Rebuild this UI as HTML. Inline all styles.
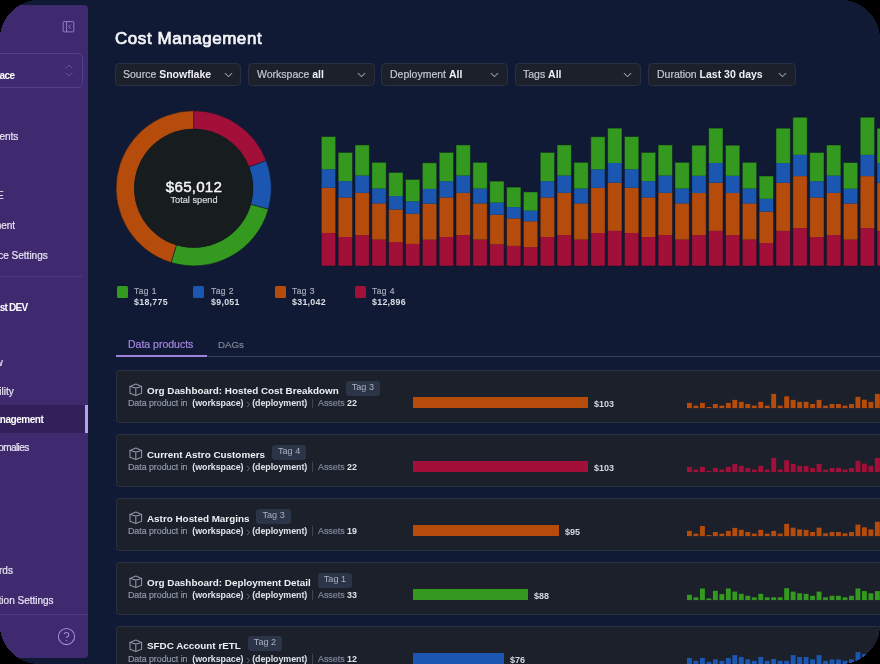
<!DOCTYPE html>
<html><head><meta charset="utf-8"><style>
html,body{margin:0;padding:0;background:#000;width:880px;height:664px;overflow:hidden}
.frame{position:absolute;left:0;top:0;width:880px;height:664px;background:#111a35;overflow:hidden}
.t{position:absolute;white-space:nowrap;line-height:1;font-family:'Liberation Sans', sans-serif;will-change:transform}
.r{-webkit-text-stroke:0.2px currentColor}
.r b{-webkit-text-stroke-width:0}
b{font-weight:700}
</style></head><body><div class="frame"><div style="position:absolute;left:0;top:5.4px;width:88px;height:652.2px;background:#3f2a70;border-radius:0 4px 4px 0"></div><div style="position:absolute;left:0;top:0;width:88px;height:664px;overflow:hidden"><div style="position:absolute;left:0;top:405px;width:88px;height:28px;background:#32205a"></div><div style="position:absolute;left:85px;top:405px;width:3px;height:28px;background:#b8a0ea"></div><div style="position:absolute;left:-60px;top:53px;width:142.5px;height:35px;border:1px solid #514089;border-radius:5px;box-sizing:border-box"></div><svg style="position:absolute;left:63px;top:63px" width="12" height="15" viewBox="0 0 12 15"><path d="M2.5 5.5 L6 2 L9.5 5.5 M2.5 9.5 L6 13 L9.5 9.5" fill="none" stroke="#63519b" stroke-width="1"/></svg><div class="t" style="right:73.40px;top:70.53px;font-size:10px;font-weight:700;color:#ffffff;letter-spacing:-0.5px">Workspace</div><svg style="position:absolute;left:62px;top:20px" width="13" height="13" viewBox="0 0 13 13"><rect x="1.2" y="1.6" width="10.6" height="10.3" rx="0.7" fill="none" stroke="#8f7cc2" stroke-width="1"/><path d="M4.6 1.6 V11.9" stroke="#8f7cc2" stroke-width="1"/><path d="M8.7 4.6 L6.7 6.7 L8.7 8.8" fill="none" stroke="#8f7cc2" stroke-width="1"/></svg><div class="t r" style="right:69.80px;top:132.03px;font-size:10px;font-weight:400;color:#e9e4f2;letter-spacing:0px">Deployments</div><div class="t r" style="right:84.60px;top:191.34px;font-size:10px;font-weight:400;color:#e9e4f2;letter-spacing:0px">Cloud IDE</div><div class="t r" style="right:73.10px;top:221.23px;font-size:10px;font-weight:400;color:#e9e4f2;letter-spacing:0px">Environment</div><div class="t r" style="right:40.50px;top:250.73px;font-size:10px;font-weight:400;color:#e9e4f2;letter-spacing:0px">Workspace Settings</div><div style="position:absolute;left:0;top:276px;width:82px;height:1px;background:#4e3c83"></div><div class="t" style="right:60.20px;top:302.74px;font-size:10px;font-weight:700;color:#ffffff;letter-spacing:-0.75px">Astronomer Test DEV</div><div class="t r" style="right:85.20px;top:358.44px;font-size:10px;font-weight:400;color:#e9e4f2;letter-spacing:0px">Overview</div><div class="t r" style="right:74.30px;top:386.94px;font-size:10px;font-weight:400;color:#e9e4f2;letter-spacing:0px">Observability</div><div class="t" style="right:44.40px;top:414.64px;font-size:10px;font-weight:700;color:#ffffff;letter-spacing:-0.45px">Cost Management</div><div class="t r" style="right:59.50px;top:442.74px;font-size:10px;font-weight:400;color:#e9e4f2;letter-spacing:-0.55px">Anomalies</div><div class="t r" style="right:74.70px;top:566.24px;font-size:10px;font-weight:400;color:#e9e4f2;letter-spacing:0px">Dashboards</div><div class="t r" style="right:34.00px;top:595.74px;font-size:10px;font-weight:400;color:#e9e4f2;letter-spacing:0px">Organization Settings</div><div style="position:absolute;left:0;top:614px;width:88px;height:1px;background:#4e3c83"></div><svg style="position:absolute;left:57px;top:626.5px" width="19" height="19" viewBox="0 0 19 19"><circle cx="9.5" cy="9.5" r="8.1" fill="none" stroke="#a08ed6" stroke-width="1.05"/><path d="M7.1 7.2 a2.4 2.4 0 0 1 4.7 0.7 c0 1.6 -2.3 2.3 -2.3 2.3 V10.8" fill="none" stroke="#a08ed6" stroke-width="1.15"/><circle cx="9.5" cy="13.6" r="0.7" fill="#a08ed6"/></svg></div><div class="t" style="left:115.30px;top:30.21px;font-size:17.0px;font-weight:400;color:#f4f5f8;-webkit-text-stroke:0.7px #f4f5f8;letter-spacing:0.55px;">Cost Management</div><div style="position:absolute;left:114.80px;top:63px;width:126.70px;height:23px;background:#1c202b;border:1px solid #272f40;border-radius:4px;box-sizing:border-box"></div><div class="t r" style="left:123.40px;top:69.31px;font-size:10.5px;font-weight:400;color:#c3c8d1;">Source <b style="font-weight:700;color:#eef0f4">Snowflake</b></div><svg style="position:absolute;left:223.60px;top:71px" width="9" height="8" viewBox="0 0 9 8"><path d="M0.9 2.2 L4.5 5.6 L8.1 2.2" fill="none" stroke="#8d95a3" stroke-width="1.1"/></svg><div style="position:absolute;left:248.30px;top:63px;width:126.30px;height:23px;background:#1c202b;border:1px solid #272f40;border-radius:4px;box-sizing:border-box"></div><div class="t r" style="left:256.90px;top:69.31px;font-size:10.5px;font-weight:400;color:#c3c8d1;">Workspace <b style="font-weight:700;color:#eef0f4">all</b></div><svg style="position:absolute;left:356.90px;top:71px" width="9" height="8" viewBox="0 0 9 8"><path d="M0.9 2.2 L4.5 5.6 L8.1 2.2" fill="none" stroke="#8d95a3" stroke-width="1.1"/></svg><div style="position:absolute;left:381.40px;top:63px;width:126.30px;height:23px;background:#1c202b;border:1px solid #272f40;border-radius:4px;box-sizing:border-box"></div><div class="t r" style="left:390.00px;top:69.31px;font-size:10.5px;font-weight:400;color:#c3c8d1;">Deployment <b style="font-weight:700;color:#eef0f4">All</b></div><svg style="position:absolute;left:489.90px;top:71px" width="9" height="8" viewBox="0 0 9 8"><path d="M0.9 2.2 L4.5 5.6 L8.1 2.2" fill="none" stroke="#8d95a3" stroke-width="1.1"/></svg><div style="position:absolute;left:514.50px;top:63px;width:126.80px;height:23px;background:#1c202b;border:1px solid #272f40;border-radius:4px;box-sizing:border-box"></div><div class="t r" style="left:523.10px;top:69.31px;font-size:10.5px;font-weight:400;color:#c3c8d1;">Tags <b style="font-weight:700;color:#eef0f4">All</b></div><svg style="position:absolute;left:623.20px;top:71px" width="9" height="8" viewBox="0 0 9 8"><path d="M0.9 2.2 L4.5 5.6 L8.1 2.2" fill="none" stroke="#8d95a3" stroke-width="1.1"/></svg><div style="position:absolute;left:648.20px;top:63px;width:147.80px;height:23px;background:#1c202b;border:1px solid #272f40;border-radius:4px;box-sizing:border-box"></div><div class="t r" style="left:656.80px;top:69.31px;font-size:10.5px;font-weight:400;color:#c3c8d1;">Duration <b style="font-weight:700;color:#eef0f4">Last 30 days</b></div><svg style="position:absolute;left:778.40px;top:71px" width="9" height="8" viewBox="0 0 9 8"><path d="M0.9 2.2 L4.5 5.6 L8.1 2.2" fill="none" stroke="#8d95a3" stroke-width="1.1"/></svg><svg style="position:absolute;left:0;top:0" width="880" height="300"><path d="M193.650 110.700 A77.6 77.6 0 0 1 266.144 160.617 L249.048 167.145 A59.3 59.3 0 0 0 193.650 129.000 Z" fill="#a21039" stroke="#141a24" stroke-width="0.6"/><path d="M266.144 160.617 A77.6 77.6 0 0 1 268.355 209.299 L250.738 204.347 A59.3 59.3 0 0 0 249.048 167.145 Z" fill="#1b57b0" stroke="#141a24" stroke-width="0.6"/><path d="M268.355 209.299 A77.6 77.6 0 0 1 171.092 262.549 L176.411 245.039 A59.3 59.3 0 0 0 250.738 204.347 Z" fill="#339a1f" stroke="#141a24" stroke-width="0.6"/><path d="M171.092 262.549 A77.6 77.6 0 0 1 193.650 110.700 L193.650 129.000 A59.3 59.3 0 0 0 176.411 245.039 Z" fill="#b54c0b" stroke="#141a24" stroke-width="0.6"/><circle cx="193.65" cy="188.3" r="59.3" fill="#171c1f"/></svg><div class="t" style="left:133.65px;top:178.63px;font-size:15.2px;font-weight:400;color:#f6f7f9;width:120px;text-align:center;-webkit-text-stroke:0.4px #f6f7f9;letter-spacing:0.2px;">$65,012</div><div class="t r" style="left:133.65px;top:196.21px;font-size:9.2px;font-weight:400;color:#d5d9df;width:120px;text-align:center;">Total spend</div><div style="position:absolute;left:116.80px;top:286px;width:11.3px;height:11.5px;background:#339a1f;border-radius:1.5px"></div><div class="t r" style="left:134.30px;top:287.10px;font-size:8.5px;font-weight:400;color:#a3aab8;letter-spacing:0.4px;">Tag 1</div><div class="t" style="left:134.30px;top:298.45px;font-size:8.8px;font-weight:700;color:#d9dde4;letter-spacing:0.3px;">$18,775</div><div style="position:absolute;left:193.20px;top:286px;width:11.3px;height:11.5px;background:#1b57b0;border-radius:1.5px"></div><div class="t r" style="left:210.70px;top:287.10px;font-size:8.5px;font-weight:400;color:#a3aab8;letter-spacing:0.4px;">Tag 2</div><div class="t" style="left:210.70px;top:298.45px;font-size:8.8px;font-weight:700;color:#d9dde4;letter-spacing:0.3px;">$9,051</div><div style="position:absolute;left:274.80px;top:286px;width:11.3px;height:11.5px;background:#b54c0b;border-radius:1.5px"></div><div class="t r" style="left:292.30px;top:287.10px;font-size:8.5px;font-weight:400;color:#a3aab8;letter-spacing:0.4px;">Tag 3</div><div class="t" style="left:292.30px;top:298.45px;font-size:8.8px;font-weight:700;color:#d9dde4;letter-spacing:0.3px;">$31,042</div><div style="position:absolute;left:354.80px;top:286px;width:11.3px;height:11.5px;background:#a21039;border-radius:1.5px"></div><div class="t r" style="left:372.30px;top:287.10px;font-size:8.5px;font-weight:400;color:#a3aab8;letter-spacing:0.4px;">Tag 4</div><div class="t" style="left:372.30px;top:298.45px;font-size:8.8px;font-weight:700;color:#d9dde4;letter-spacing:0.3px;">$12,896</div><svg style="position:absolute;left:0;top:0" width="880" height="300"><rect x="321.30" y="232.98" width="14.4" height="33.02" fill="#a21039"/><rect x="321.30" y="187.78" width="14.4" height="45.20" fill="#b54c0b"/><rect x="321.30" y="169.26" width="14.4" height="18.52" fill="#1b57b0"/><rect x="321.30" y="136.50" width="14.4" height="32.76" fill="#339a1f"/><rect x="321.30" y="136.50" width="14.4" height="129.50" rx="1.2" fill="none" stroke="rgba(10,14,28,0.55)" stroke-width="0.8"/><rect x="338.14" y="237.03" width="14.4" height="28.97" fill="#a21039"/><rect x="338.14" y="197.39" width="14.4" height="39.65" fill="#b54c0b"/><rect x="338.14" y="181.14" width="14.4" height="16.24" fill="#1b57b0"/><rect x="338.14" y="152.40" width="14.4" height="28.74" fill="#339a1f"/><rect x="338.14" y="152.40" width="14.4" height="113.60" rx="1.2" fill="none" stroke="rgba(10,14,28,0.55)" stroke-width="0.8"/><rect x="354.98" y="235.12" width="14.4" height="30.88" fill="#a21039"/><rect x="354.98" y="192.86" width="14.4" height="42.26" fill="#b54c0b"/><rect x="354.98" y="175.54" width="14.4" height="17.32" fill="#1b57b0"/><rect x="354.98" y="144.90" width="14.4" height="30.64" fill="#339a1f"/><rect x="354.98" y="144.90" width="14.4" height="121.10" rx="1.2" fill="none" stroke="rgba(10,14,28,0.55)" stroke-width="0.8"/><rect x="371.82" y="239.56" width="14.4" height="26.44" fill="#a21039"/><rect x="371.82" y="203.37" width="14.4" height="36.19" fill="#b54c0b"/><rect x="371.82" y="188.54" width="14.4" height="14.83" fill="#1b57b0"/><rect x="371.82" y="162.30" width="14.4" height="26.24" fill="#339a1f"/><rect x="371.82" y="162.30" width="14.4" height="103.70" rx="1.2" fill="none" stroke="rgba(10,14,28,0.55)" stroke-width="0.8"/><rect x="388.66" y="242.13" width="14.4" height="23.87" fill="#a21039"/><rect x="388.66" y="209.47" width="14.4" height="32.67" fill="#b54c0b"/><rect x="388.66" y="196.08" width="14.4" height="13.38" fill="#1b57b0"/><rect x="388.66" y="172.40" width="14.4" height="23.68" fill="#339a1f"/><rect x="388.66" y="172.40" width="14.4" height="93.60" rx="1.2" fill="none" stroke="rgba(10,14,28,0.55)" stroke-width="0.8"/><rect x="405.50" y="243.92" width="14.4" height="22.08" fill="#a21039"/><rect x="405.50" y="213.69" width="14.4" height="30.22" fill="#b54c0b"/><rect x="405.50" y="201.31" width="14.4" height="12.38" fill="#1b57b0"/><rect x="405.50" y="179.40" width="14.4" height="21.91" fill="#339a1f"/><rect x="405.50" y="179.40" width="14.4" height="86.60" rx="1.2" fill="none" stroke="rgba(10,14,28,0.55)" stroke-width="0.8"/><rect x="422.34" y="239.68" width="14.4" height="26.32" fill="#a21039"/><rect x="422.34" y="203.67" width="14.4" height="36.02" fill="#b54c0b"/><rect x="422.34" y="188.91" width="14.4" height="14.76" fill="#1b57b0"/><rect x="422.34" y="162.80" width="14.4" height="26.11" fill="#339a1f"/><rect x="422.34" y="162.80" width="14.4" height="103.20" rx="1.2" fill="none" stroke="rgba(10,14,28,0.55)" stroke-width="0.8"/><rect x="439.18" y="237.03" width="14.4" height="28.97" fill="#a21039"/><rect x="439.18" y="197.39" width="14.4" height="39.65" fill="#b54c0b"/><rect x="439.18" y="181.14" width="14.4" height="16.24" fill="#1b57b0"/><rect x="439.18" y="152.40" width="14.4" height="28.74" fill="#339a1f"/><rect x="439.18" y="152.40" width="14.4" height="113.60" rx="1.2" fill="none" stroke="rgba(10,14,28,0.55)" stroke-width="0.8"/><rect x="456.02" y="235.12" width="14.4" height="30.88" fill="#a21039"/><rect x="456.02" y="192.86" width="14.4" height="42.26" fill="#b54c0b"/><rect x="456.02" y="175.54" width="14.4" height="17.32" fill="#1b57b0"/><rect x="456.02" y="144.90" width="14.4" height="30.64" fill="#339a1f"/><rect x="456.02" y="144.90" width="14.4" height="121.10" rx="1.2" fill="none" stroke="rgba(10,14,28,0.55)" stroke-width="0.8"/><rect x="472.86" y="239.56" width="14.4" height="26.44" fill="#a21039"/><rect x="472.86" y="203.37" width="14.4" height="36.19" fill="#b54c0b"/><rect x="472.86" y="188.54" width="14.4" height="14.83" fill="#1b57b0"/><rect x="472.86" y="162.30" width="14.4" height="26.24" fill="#339a1f"/><rect x="472.86" y="162.30" width="14.4" height="103.70" rx="1.2" fill="none" stroke="rgba(10,14,28,0.55)" stroke-width="0.8"/><rect x="489.70" y="244.35" width="14.4" height="21.65" fill="#a21039"/><rect x="489.70" y="214.72" width="14.4" height="29.63" fill="#b54c0b"/><rect x="489.70" y="202.58" width="14.4" height="12.14" fill="#1b57b0"/><rect x="489.70" y="181.10" width="14.4" height="21.48" fill="#339a1f"/><rect x="489.70" y="181.10" width="14.4" height="84.90" rx="1.2" fill="none" stroke="rgba(10,14,28,0.55)" stroke-width="0.8"/><rect x="506.54" y="245.88" width="14.4" height="20.12" fill="#a21039"/><rect x="506.54" y="218.34" width="14.4" height="27.54" fill="#b54c0b"/><rect x="506.54" y="207.06" width="14.4" height="11.28" fill="#1b57b0"/><rect x="506.54" y="187.10" width="14.4" height="19.96" fill="#339a1f"/><rect x="506.54" y="187.10" width="14.4" height="78.90" rx="1.2" fill="none" stroke="rgba(10,14,28,0.55)" stroke-width="0.8"/><rect x="523.38" y="247.10" width="14.4" height="18.90" fill="#a21039"/><rect x="523.38" y="221.24" width="14.4" height="25.86" fill="#b54c0b"/><rect x="523.38" y="210.65" width="14.4" height="10.60" fill="#1b57b0"/><rect x="523.38" y="191.90" width="14.4" height="18.75" fill="#339a1f"/><rect x="523.38" y="191.90" width="14.4" height="74.10" rx="1.2" fill="none" stroke="rgba(10,14,28,0.55)" stroke-width="0.8"/><rect x="540.22" y="237.03" width="14.4" height="28.97" fill="#a21039"/><rect x="540.22" y="197.39" width="14.4" height="39.65" fill="#b54c0b"/><rect x="540.22" y="181.14" width="14.4" height="16.24" fill="#1b57b0"/><rect x="540.22" y="152.40" width="14.4" height="28.74" fill="#339a1f"/><rect x="540.22" y="152.40" width="14.4" height="113.60" rx="1.2" fill="none" stroke="rgba(10,14,28,0.55)" stroke-width="0.8"/><rect x="557.06" y="235.12" width="14.4" height="30.88" fill="#a21039"/><rect x="557.06" y="192.86" width="14.4" height="42.26" fill="#b54c0b"/><rect x="557.06" y="175.54" width="14.4" height="17.32" fill="#1b57b0"/><rect x="557.06" y="144.90" width="14.4" height="30.64" fill="#339a1f"/><rect x="557.06" y="144.90" width="14.4" height="121.10" rx="1.2" fill="none" stroke="rgba(10,14,28,0.55)" stroke-width="0.8"/><rect x="573.90" y="239.56" width="14.4" height="26.44" fill="#a21039"/><rect x="573.90" y="203.37" width="14.4" height="36.19" fill="#b54c0b"/><rect x="573.90" y="188.54" width="14.4" height="14.83" fill="#1b57b0"/><rect x="573.90" y="162.30" width="14.4" height="26.24" fill="#339a1f"/><rect x="573.90" y="162.30" width="14.4" height="103.70" rx="1.2" fill="none" stroke="rgba(10,14,28,0.55)" stroke-width="0.8"/><rect x="590.74" y="233.03" width="14.4" height="32.97" fill="#a21039"/><rect x="590.74" y="187.90" width="14.4" height="45.13" fill="#b54c0b"/><rect x="590.74" y="169.41" width="14.4" height="18.49" fill="#1b57b0"/><rect x="590.74" y="136.70" width="14.4" height="32.71" fill="#339a1f"/><rect x="590.74" y="136.70" width="14.4" height="129.30" rx="1.2" fill="none" stroke="rgba(10,14,28,0.55)" stroke-width="0.8"/><rect x="607.58" y="230.84" width="14.4" height="35.16" fill="#a21039"/><rect x="607.58" y="182.71" width="14.4" height="48.13" fill="#b54c0b"/><rect x="607.58" y="162.99" width="14.4" height="19.72" fill="#1b57b0"/><rect x="607.58" y="128.10" width="14.4" height="34.89" fill="#339a1f"/><rect x="607.58" y="128.10" width="14.4" height="137.90" rx="1.2" fill="none" stroke="rgba(10,14,28,0.55)" stroke-width="0.8"/><rect x="624.42" y="232.98" width="14.4" height="33.02" fill="#a21039"/><rect x="624.42" y="187.78" width="14.4" height="45.20" fill="#b54c0b"/><rect x="624.42" y="169.26" width="14.4" height="18.52" fill="#1b57b0"/><rect x="624.42" y="136.50" width="14.4" height="32.76" fill="#339a1f"/><rect x="624.42" y="136.50" width="14.4" height="129.50" rx="1.2" fill="none" stroke="rgba(10,14,28,0.55)" stroke-width="0.8"/><rect x="641.26" y="237.03" width="14.4" height="28.97" fill="#a21039"/><rect x="641.26" y="197.39" width="14.4" height="39.65" fill="#b54c0b"/><rect x="641.26" y="181.14" width="14.4" height="16.24" fill="#1b57b0"/><rect x="641.26" y="152.40" width="14.4" height="28.74" fill="#339a1f"/><rect x="641.26" y="152.40" width="14.4" height="113.60" rx="1.2" fill="none" stroke="rgba(10,14,28,0.55)" stroke-width="0.8"/><rect x="658.10" y="235.12" width="14.4" height="30.88" fill="#a21039"/><rect x="658.10" y="192.86" width="14.4" height="42.26" fill="#b54c0b"/><rect x="658.10" y="175.54" width="14.4" height="17.32" fill="#1b57b0"/><rect x="658.10" y="144.90" width="14.4" height="30.64" fill="#339a1f"/><rect x="658.10" y="144.90" width="14.4" height="121.10" rx="1.2" fill="none" stroke="rgba(10,14,28,0.55)" stroke-width="0.8"/><rect x="674.94" y="239.56" width="14.4" height="26.44" fill="#a21039"/><rect x="674.94" y="203.37" width="14.4" height="36.19" fill="#b54c0b"/><rect x="674.94" y="188.54" width="14.4" height="14.83" fill="#1b57b0"/><rect x="674.94" y="162.30" width="14.4" height="26.24" fill="#339a1f"/><rect x="674.94" y="162.30" width="14.4" height="103.70" rx="1.2" fill="none" stroke="rgba(10,14,28,0.55)" stroke-width="0.8"/><rect x="691.78" y="235.20" width="14.4" height="30.80" fill="#a21039"/><rect x="691.78" y="193.04" width="14.4" height="42.16" fill="#b54c0b"/><rect x="691.78" y="175.76" width="14.4" height="17.27" fill="#1b57b0"/><rect x="691.78" y="145.20" width="14.4" height="30.56" fill="#339a1f"/><rect x="691.78" y="145.20" width="14.4" height="120.80" rx="1.2" fill="none" stroke="rgba(10,14,28,0.55)" stroke-width="0.8"/><rect x="708.62" y="230.84" width="14.4" height="35.16" fill="#a21039"/><rect x="708.62" y="182.71" width="14.4" height="48.13" fill="#b54c0b"/><rect x="708.62" y="162.99" width="14.4" height="19.72" fill="#1b57b0"/><rect x="708.62" y="128.10" width="14.4" height="34.89" fill="#339a1f"/><rect x="708.62" y="128.10" width="14.4" height="137.90" rx="1.2" fill="none" stroke="rgba(10,14,28,0.55)" stroke-width="0.8"/><rect x="725.46" y="235.20" width="14.4" height="30.80" fill="#a21039"/><rect x="725.46" y="193.04" width="14.4" height="42.16" fill="#b54c0b"/><rect x="725.46" y="175.76" width="14.4" height="17.27" fill="#1b57b0"/><rect x="725.46" y="145.20" width="14.4" height="30.56" fill="#339a1f"/><rect x="725.46" y="145.20" width="14.4" height="120.80" rx="1.2" fill="none" stroke="rgba(10,14,28,0.55)" stroke-width="0.8"/><rect x="742.30" y="239.56" width="14.4" height="26.44" fill="#a21039"/><rect x="742.30" y="203.37" width="14.4" height="36.19" fill="#b54c0b"/><rect x="742.30" y="188.54" width="14.4" height="14.83" fill="#1b57b0"/><rect x="742.30" y="162.30" width="14.4" height="26.24" fill="#339a1f"/><rect x="742.30" y="162.30" width="14.4" height="103.70" rx="1.2" fill="none" stroke="rgba(10,14,28,0.55)" stroke-width="0.8"/><rect x="759.14" y="243.05" width="14.4" height="22.95" fill="#a21039"/><rect x="759.14" y="211.64" width="14.4" height="31.41" fill="#b54c0b"/><rect x="759.14" y="198.77" width="14.4" height="12.87" fill="#1b57b0"/><rect x="759.14" y="176.00" width="14.4" height="22.77" fill="#339a1f"/><rect x="759.14" y="176.00" width="14.4" height="90.00" rx="1.2" fill="none" stroke="rgba(10,14,28,0.55)" stroke-width="0.8"/><rect x="775.98" y="230.86" width="14.4" height="35.14" fill="#a21039"/><rect x="775.98" y="182.77" width="14.4" height="48.09" fill="#b54c0b"/><rect x="775.98" y="163.06" width="14.4" height="19.71" fill="#1b57b0"/><rect x="775.98" y="128.20" width="14.4" height="34.86" fill="#339a1f"/><rect x="775.98" y="128.20" width="14.4" height="137.80" rx="1.2" fill="none" stroke="rgba(10,14,28,0.55)" stroke-width="0.8"/><rect x="792.82" y="228.06" width="14.4" height="37.94" fill="#a21039"/><rect x="792.82" y="176.12" width="14.4" height="51.93" fill="#b54c0b"/><rect x="792.82" y="154.85" width="14.4" height="21.28" fill="#1b57b0"/><rect x="792.82" y="117.20" width="14.4" height="37.65" fill="#339a1f"/><rect x="792.82" y="117.20" width="14.4" height="148.80" rx="1.2" fill="none" stroke="rgba(10,14,28,0.55)" stroke-width="0.8"/><rect x="809.66" y="237.06" width="14.4" height="28.94" fill="#a21039"/><rect x="809.66" y="197.45" width="14.4" height="39.61" fill="#b54c0b"/><rect x="809.66" y="181.22" width="14.4" height="16.23" fill="#1b57b0"/><rect x="809.66" y="152.50" width="14.4" height="28.72" fill="#339a1f"/><rect x="809.66" y="152.50" width="14.4" height="113.50" rx="1.2" fill="none" stroke="rgba(10,14,28,0.55)" stroke-width="0.8"/><rect x="826.50" y="235.15" width="14.4" height="30.86" fill="#a21039"/><rect x="826.50" y="192.92" width="14.4" height="42.23" fill="#b54c0b"/><rect x="826.50" y="175.61" width="14.4" height="17.30" fill="#1b57b0"/><rect x="826.50" y="145.00" width="14.4" height="30.61" fill="#339a1f"/><rect x="826.50" y="145.00" width="14.4" height="121.00" rx="1.2" fill="none" stroke="rgba(10,14,28,0.55)" stroke-width="0.8"/><rect x="843.34" y="239.61" width="14.4" height="26.39" fill="#a21039"/><rect x="843.34" y="203.49" width="14.4" height="36.12" fill="#b54c0b"/><rect x="843.34" y="188.69" width="14.4" height="14.80" fill="#1b57b0"/><rect x="843.34" y="162.50" width="14.4" height="26.19" fill="#339a1f"/><rect x="843.34" y="162.50" width="14.4" height="103.50" rx="1.2" fill="none" stroke="rgba(10,14,28,0.55)" stroke-width="0.8"/><rect x="860.18" y="228.06" width="14.4" height="37.94" fill="#a21039"/><rect x="860.18" y="176.12" width="14.4" height="51.93" fill="#b54c0b"/><rect x="860.18" y="154.85" width="14.4" height="21.28" fill="#1b57b0"/><rect x="860.18" y="117.20" width="14.4" height="37.65" fill="#339a1f"/><rect x="860.18" y="117.20" width="14.4" height="148.80" rx="1.2" fill="none" stroke="rgba(10,14,28,0.55)" stroke-width="0.8"/><rect x="877.02" y="230.86" width="14.4" height="35.14" fill="#a21039"/><rect x="877.02" y="182.77" width="14.4" height="48.09" fill="#b54c0b"/><rect x="877.02" y="163.06" width="14.4" height="19.71" fill="#1b57b0"/><rect x="877.02" y="128.20" width="14.4" height="34.86" fill="#339a1f"/><rect x="877.02" y="128.20" width="14.4" height="137.80" rx="1.2" fill="none" stroke="rgba(10,14,28,0.55)" stroke-width="0.8"/></svg><div style="position:absolute;left:116px;top:356px;width:764px;height:1px;background:#3a4357"></div><div style="position:absolute;left:116px;top:355px;width:90.5px;height:2px;background:#9f80dd"></div><div class="t r" style="left:128.30px;top:339.11px;font-size:10.5px;font-weight:400;color:#a386e0;">Data products</div><div class="t r" style="left:217.70px;top:339.79px;font-size:9.7px;font-weight:400;color:#7d8597;">DAGs</div><div style="position:absolute;left:116px;top:370px;width:800px;height:53px;background:#1c202b;border:1px solid #272f40;border-radius:3px;box-sizing:border-box"></div><svg style="position:absolute;left:128.8px;top:382.80px" width="15" height="15" viewBox="0 0 15 15" fill="none" stroke="#8a93a5" stroke-width="1.05" stroke-linecap="round" stroke-linejoin="round"><path d="M6.8 1.0 L12.6 3.4 V10.3 L6.8 12.6 L1.0 10.3 V3.4 Z"/><path d="M1.0 3.4 L6.8 4.9 L12.6 3.4 M6.8 4.9 V12.6"/></svg><div style="position:absolute;left:147.3px;top:385.65px;display:flex;align-items:flex-start;white-space:nowrap;font-family:'Liberation Sans', sans-serif;will-change:transform"><span style="font-size:9.87px;line-height:1;font-weight:700;color:#eceff3">Org Dashboard: Hosted Cost Breakdown</span><span style="margin-left:7px;margin-top:-4.55px;height:14.4px;padding:0 6px;background:#2c3548;border-radius:3px;font-size:9.1px;line-height:12.4px;color:#aab2bf">Tag 3</span></div><div class="t r" style="left:127.70px;top:399.27px;font-size:8.9px;font-weight:400;color:#8f97a6;letter-spacing:-0.05px;">Data product in&nbsp; <b style="font-weight:700;color:#dfe2e8">(workspace)</b><span style="display:inline-block;width:8.6px;height:1px;position:relative"><svg style="position:absolute;left:2.7px;top:-4.4px" width="5" height="7" viewBox="0 0 5 7"><path d="M1 1 L3.6 3.5 L1 6" fill="none" stroke="#666e80" stroke-width="0.9"/></svg></span><b style="font-weight:700;color:#dfe2e8">(deployment)</b></div><div style="position:absolute;left:312px;top:398.50px;width:1px;height:9.5px;background:#3c4352"></div><div class="t r" style="left:318.20px;top:399.27px;font-size:8.9px;font-weight:400;color:#7e8799;">Assets <b style="font-weight:700;color:#dfe2e8">22</b></div><div style="position:absolute;left:412.5px;top:396.80px;width:175.70px;height:11.4px;background:#b54c0b"></div><div class="t" style="left:594.20px;top:399.88px;font-size:9px;font-weight:700;color:#d3d7de;">$103</div><svg style="position:absolute;left:0;top:0" width="880" height="664"><rect x="687.00" y="402.90" width="4.9" height="5.20" fill="#b54c0b"/><rect x="693.48" y="405.60" width="4.9" height="2.50" fill="#b54c0b"/><rect x="699.96" y="402.90" width="4.9" height="5.20" fill="#b54c0b"/><rect x="706.44" y="407.00" width="4.9" height="1.10" fill="#b54c0b"/><rect x="712.92" y="404.00" width="4.9" height="4.10" fill="#b54c0b"/><rect x="719.40" y="405.60" width="4.9" height="2.50" fill="#b54c0b"/><rect x="725.88" y="402.90" width="4.9" height="5.20" fill="#b54c0b"/><rect x="732.36" y="399.90" width="4.9" height="8.20" fill="#b54c0b"/><rect x="738.84" y="401.85" width="4.9" height="6.25" fill="#b54c0b"/><rect x="745.32" y="404.00" width="4.9" height="4.10" fill="#b54c0b"/><rect x="751.80" y="405.60" width="4.9" height="2.50" fill="#b54c0b"/><rect x="758.28" y="401.85" width="4.9" height="6.25" fill="#b54c0b"/><rect x="764.76" y="405.60" width="4.9" height="2.50" fill="#b54c0b"/><rect x="771.24" y="393.90" width="4.9" height="14.20" fill="#b54c0b"/><rect x="777.72" y="405.60" width="4.9" height="2.50" fill="#b54c0b"/><rect x="784.20" y="396.30" width="4.9" height="11.80" fill="#b54c0b"/><rect x="790.68" y="399.90" width="4.9" height="8.20" fill="#b54c0b"/><rect x="797.16" y="401.85" width="4.9" height="6.25" fill="#b54c0b"/><rect x="803.64" y="401.85" width="4.9" height="6.25" fill="#b54c0b"/><rect x="810.12" y="404.00" width="4.9" height="4.10" fill="#b54c0b"/><rect x="816.60" y="399.90" width="4.9" height="8.20" fill="#b54c0b"/><rect x="823.08" y="405.60" width="4.9" height="2.50" fill="#b54c0b"/><rect x="829.56" y="404.00" width="4.9" height="4.10" fill="#b54c0b"/><rect x="836.04" y="404.00" width="4.9" height="4.10" fill="#b54c0b"/><rect x="842.52" y="405.60" width="4.9" height="2.50" fill="#b54c0b"/><rect x="849.00" y="404.00" width="4.9" height="4.10" fill="#b54c0b"/><rect x="855.48" y="396.85" width="4.9" height="11.25" fill="#b54c0b"/><rect x="861.96" y="399.70" width="4.9" height="8.40" fill="#b54c0b"/><rect x="868.44" y="401.85" width="4.9" height="6.25" fill="#b54c0b"/><rect x="874.92" y="393.90" width="4.9" height="14.20" fill="#b54c0b"/></svg><div style="position:absolute;left:116px;top:434px;width:800px;height:53px;background:#1c202b;border:1px solid #272f40;border-radius:3px;box-sizing:border-box"></div><svg style="position:absolute;left:128.8px;top:446.80px" width="15" height="15" viewBox="0 0 15 15" fill="none" stroke="#8a93a5" stroke-width="1.05" stroke-linecap="round" stroke-linejoin="round"><path d="M6.8 1.0 L12.6 3.4 V10.3 L6.8 12.6 L1.0 10.3 V3.4 Z"/><path d="M1.0 3.4 L6.8 4.9 L12.6 3.4 M6.8 4.9 V12.6"/></svg><div style="position:absolute;left:147.3px;top:449.60px;display:flex;align-items:flex-start;white-space:nowrap;font-family:'Liberation Sans', sans-serif;will-change:transform"><span style="font-size:9.87px;line-height:1;font-weight:700;color:#eceff3">Current Astro Customers</span><span style="margin-left:7px;margin-top:-4.55px;height:14.4px;padding:0 6px;background:#2c3548;border-radius:3px;font-size:9.1px;line-height:12.4px;color:#aab2bf">Tag 4</span></div><div class="t r" style="left:127.70px;top:463.22px;font-size:8.9px;font-weight:400;color:#8f97a6;letter-spacing:-0.05px;">Data product in&nbsp; <b style="font-weight:700;color:#dfe2e8">(workspace)</b><span style="display:inline-block;width:8.6px;height:1px;position:relative"><svg style="position:absolute;left:2.7px;top:-4.4px" width="5" height="7" viewBox="0 0 5 7"><path d="M1 1 L3.6 3.5 L1 6" fill="none" stroke="#666e80" stroke-width="0.9"/></svg></span><b style="font-weight:700;color:#dfe2e8">(deployment)</b></div><div style="position:absolute;left:312px;top:462.45px;width:1px;height:9.5px;background:#3c4352"></div><div class="t r" style="left:318.20px;top:463.22px;font-size:8.9px;font-weight:400;color:#7e8799;">Assets <b style="font-weight:700;color:#dfe2e8">22</b></div><div style="position:absolute;left:412.5px;top:460.75px;width:175.70px;height:11.4px;background:#a21039"></div><div class="t" style="left:594.20px;top:463.83px;font-size:9px;font-weight:700;color:#d3d7de;">$103</div><svg style="position:absolute;left:0;top:0" width="880" height="664"><rect x="687.00" y="466.90" width="4.9" height="5.20" fill="#a21039"/><rect x="693.48" y="469.60" width="4.9" height="2.50" fill="#a21039"/><rect x="699.96" y="466.90" width="4.9" height="5.20" fill="#a21039"/><rect x="706.44" y="471.00" width="4.9" height="1.10" fill="#a21039"/><rect x="712.92" y="468.00" width="4.9" height="4.10" fill="#a21039"/><rect x="719.40" y="469.60" width="4.9" height="2.50" fill="#a21039"/><rect x="725.88" y="466.90" width="4.9" height="5.20" fill="#a21039"/><rect x="732.36" y="463.90" width="4.9" height="8.20" fill="#a21039"/><rect x="738.84" y="465.85" width="4.9" height="6.25" fill="#a21039"/><rect x="745.32" y="468.00" width="4.9" height="4.10" fill="#a21039"/><rect x="751.80" y="469.60" width="4.9" height="2.50" fill="#a21039"/><rect x="758.28" y="465.85" width="4.9" height="6.25" fill="#a21039"/><rect x="764.76" y="469.60" width="4.9" height="2.50" fill="#a21039"/><rect x="771.24" y="457.90" width="4.9" height="14.20" fill="#a21039"/><rect x="777.72" y="469.60" width="4.9" height="2.50" fill="#a21039"/><rect x="784.20" y="460.30" width="4.9" height="11.80" fill="#a21039"/><rect x="790.68" y="463.90" width="4.9" height="8.20" fill="#a21039"/><rect x="797.16" y="465.85" width="4.9" height="6.25" fill="#a21039"/><rect x="803.64" y="465.85" width="4.9" height="6.25" fill="#a21039"/><rect x="810.12" y="468.00" width="4.9" height="4.10" fill="#a21039"/><rect x="816.60" y="463.90" width="4.9" height="8.20" fill="#a21039"/><rect x="823.08" y="469.60" width="4.9" height="2.50" fill="#a21039"/><rect x="829.56" y="468.00" width="4.9" height="4.10" fill="#a21039"/><rect x="836.04" y="468.00" width="4.9" height="4.10" fill="#a21039"/><rect x="842.52" y="469.60" width="4.9" height="2.50" fill="#a21039"/><rect x="849.00" y="468.00" width="4.9" height="4.10" fill="#a21039"/><rect x="855.48" y="460.85" width="4.9" height="11.25" fill="#a21039"/><rect x="861.96" y="463.70" width="4.9" height="8.40" fill="#a21039"/><rect x="868.44" y="465.85" width="4.9" height="6.25" fill="#a21039"/><rect x="874.92" y="457.90" width="4.9" height="14.20" fill="#a21039"/></svg><div style="position:absolute;left:116px;top:498px;width:800px;height:53px;background:#1c202b;border:1px solid #272f40;border-radius:3px;box-sizing:border-box"></div><svg style="position:absolute;left:128.8px;top:510.80px" width="15" height="15" viewBox="0 0 15 15" fill="none" stroke="#8a93a5" stroke-width="1.05" stroke-linecap="round" stroke-linejoin="round"><path d="M6.8 1.0 L12.6 3.4 V10.3 L6.8 12.6 L1.0 10.3 V3.4 Z"/><path d="M1.0 3.4 L6.8 4.9 L12.6 3.4 M6.8 4.9 V12.6"/></svg><div style="position:absolute;left:147.3px;top:513.55px;display:flex;align-items:flex-start;white-space:nowrap;font-family:'Liberation Sans', sans-serif;will-change:transform"><span style="font-size:9.87px;line-height:1;font-weight:700;color:#eceff3">Astro Hosted Margins</span><span style="margin-left:7px;margin-top:-4.55px;height:14.4px;padding:0 6px;background:#2c3548;border-radius:3px;font-size:9.1px;line-height:12.4px;color:#aab2bf">Tag 3</span></div><div class="t r" style="left:127.70px;top:527.17px;font-size:8.9px;font-weight:400;color:#8f97a6;letter-spacing:-0.05px;">Data product in&nbsp; <b style="font-weight:700;color:#dfe2e8">(workspace)</b><span style="display:inline-block;width:8.6px;height:1px;position:relative"><svg style="position:absolute;left:2.7px;top:-4.4px" width="5" height="7" viewBox="0 0 5 7"><path d="M1 1 L3.6 3.5 L1 6" fill="none" stroke="#666e80" stroke-width="0.9"/></svg></span><b style="font-weight:700;color:#dfe2e8">(deployment)</b></div><div style="position:absolute;left:312px;top:526.40px;width:1px;height:9.5px;background:#3c4352"></div><div class="t r" style="left:318.20px;top:527.17px;font-size:8.9px;font-weight:400;color:#7e8799;">Assets <b style="font-weight:700;color:#dfe2e8">19</b></div><div style="position:absolute;left:412.5px;top:524.70px;width:146.50px;height:11.4px;background:#b54c0b"></div><div class="t" style="left:565.00px;top:527.78px;font-size:9px;font-weight:700;color:#d3d7de;">$95</div><svg style="position:absolute;left:0;top:0" width="880" height="664"><rect x="687.00" y="530.90" width="4.9" height="5.20" fill="#b54c0b"/><rect x="693.48" y="533.60" width="4.9" height="2.50" fill="#b54c0b"/><rect x="699.96" y="526.00" width="4.9" height="10.10" fill="#b54c0b"/><rect x="706.44" y="535.00" width="4.9" height="1.10" fill="#b54c0b"/><rect x="712.92" y="532.00" width="4.9" height="4.10" fill="#b54c0b"/><rect x="719.40" y="533.60" width="4.9" height="2.50" fill="#b54c0b"/><rect x="725.88" y="530.90" width="4.9" height="5.20" fill="#b54c0b"/><rect x="732.36" y="527.90" width="4.9" height="8.20" fill="#b54c0b"/><rect x="738.84" y="529.85" width="4.9" height="6.25" fill="#b54c0b"/><rect x="745.32" y="532.00" width="4.9" height="4.10" fill="#b54c0b"/><rect x="751.80" y="533.60" width="4.9" height="2.50" fill="#b54c0b"/><rect x="758.28" y="529.85" width="4.9" height="6.25" fill="#b54c0b"/><rect x="764.76" y="533.60" width="4.9" height="2.50" fill="#b54c0b"/><rect x="771.24" y="530.90" width="4.9" height="5.20" fill="#b54c0b"/><rect x="777.72" y="533.60" width="4.9" height="2.50" fill="#b54c0b"/><rect x="784.20" y="523.90" width="4.9" height="12.20" fill="#b54c0b"/><rect x="790.68" y="527.70" width="4.9" height="8.40" fill="#b54c0b"/><rect x="797.16" y="529.40" width="4.9" height="6.70" fill="#b54c0b"/><rect x="803.64" y="529.85" width="4.9" height="6.25" fill="#b54c0b"/><rect x="810.12" y="532.00" width="4.9" height="4.10" fill="#b54c0b"/><rect x="816.60" y="527.70" width="4.9" height="8.40" fill="#b54c0b"/><rect x="823.08" y="533.30" width="4.9" height="2.80" fill="#b54c0b"/><rect x="829.56" y="532.00" width="4.9" height="4.10" fill="#b54c0b"/><rect x="836.04" y="532.00" width="4.9" height="4.10" fill="#b54c0b"/><rect x="842.52" y="533.30" width="4.9" height="2.80" fill="#b54c0b"/><rect x="849.00" y="532.00" width="4.9" height="4.10" fill="#b54c0b"/><rect x="855.48" y="524.60" width="4.9" height="11.50" fill="#b54c0b"/><rect x="861.96" y="527.35" width="4.9" height="8.75" fill="#b54c0b"/><rect x="868.44" y="529.40" width="4.9" height="6.70" fill="#b54c0b"/><rect x="874.92" y="521.70" width="4.9" height="14.40" fill="#b54c0b"/></svg><div style="position:absolute;left:116px;top:562px;width:800px;height:53px;background:#1c202b;border:1px solid #272f40;border-radius:3px;box-sizing:border-box"></div><svg style="position:absolute;left:128.8px;top:574.80px" width="15" height="15" viewBox="0 0 15 15" fill="none" stroke="#8a93a5" stroke-width="1.05" stroke-linecap="round" stroke-linejoin="round"><path d="M6.8 1.0 L12.6 3.4 V10.3 L6.8 12.6 L1.0 10.3 V3.4 Z"/><path d="M1.0 3.4 L6.8 4.9 L12.6 3.4 M6.8 4.9 V12.6"/></svg><div style="position:absolute;left:147.3px;top:577.50px;display:flex;align-items:flex-start;white-space:nowrap;font-family:'Liberation Sans', sans-serif;will-change:transform"><span style="font-size:9.87px;line-height:1;font-weight:700;color:#eceff3">Org Dashboard: Deployment Detail</span><span style="margin-left:7px;margin-top:-4.55px;height:14.4px;padding:0 6px;background:#2c3548;border-radius:3px;font-size:9.1px;line-height:12.4px;color:#aab2bf">Tag 1</span></div><div class="t r" style="left:127.70px;top:591.12px;font-size:8.9px;font-weight:400;color:#8f97a6;letter-spacing:-0.05px;">Data product in&nbsp; <b style="font-weight:700;color:#dfe2e8">(workspace)</b><span style="display:inline-block;width:8.6px;height:1px;position:relative"><svg style="position:absolute;left:2.7px;top:-4.4px" width="5" height="7" viewBox="0 0 5 7"><path d="M1 1 L3.6 3.5 L1 6" fill="none" stroke="#666e80" stroke-width="0.9"/></svg></span><b style="font-weight:700;color:#dfe2e8">(deployment)</b></div><div style="position:absolute;left:312px;top:590.35px;width:1px;height:9.5px;background:#3c4352"></div><div class="t r" style="left:318.20px;top:591.12px;font-size:8.9px;font-weight:400;color:#7e8799;">Assets <b style="font-weight:700;color:#dfe2e8">33</b></div><div style="position:absolute;left:412.5px;top:588.65px;width:115.70px;height:11.4px;background:#339a1f"></div><div class="t" style="left:534.20px;top:591.73px;font-size:9px;font-weight:700;color:#d3d7de;">$88</div><svg style="position:absolute;left:0;top:0" width="880" height="664"><rect x="687.00" y="594.80" width="4.9" height="5.30" fill="#339a1f"/><rect x="693.48" y="597.30" width="4.9" height="2.80" fill="#339a1f"/><rect x="699.96" y="588.50" width="4.9" height="11.60" fill="#339a1f"/><rect x="706.44" y="598.40" width="4.9" height="1.70" fill="#339a1f"/><rect x="712.92" y="590.80" width="4.9" height="9.30" fill="#339a1f"/><rect x="719.40" y="594.10" width="4.9" height="6.00" fill="#339a1f"/><rect x="725.88" y="588.50" width="4.9" height="11.60" fill="#339a1f"/><rect x="732.36" y="591.60" width="4.9" height="8.50" fill="#339a1f"/><rect x="738.84" y="593.85" width="4.9" height="6.25" fill="#339a1f"/><rect x="745.32" y="595.80" width="4.9" height="4.30" fill="#339a1f"/><rect x="751.80" y="597.30" width="4.9" height="2.80" fill="#339a1f"/><rect x="758.28" y="593.85" width="4.9" height="6.25" fill="#339a1f"/><rect x="764.76" y="597.30" width="4.9" height="2.80" fill="#339a1f"/><rect x="771.24" y="597.30" width="4.9" height="2.80" fill="#339a1f"/><rect x="777.72" y="597.30" width="4.9" height="2.80" fill="#339a1f"/><rect x="784.20" y="588.20" width="4.9" height="11.90" fill="#339a1f"/><rect x="790.68" y="591.60" width="4.9" height="8.50" fill="#339a1f"/><rect x="797.16" y="593.30" width="4.9" height="6.80" fill="#339a1f"/><rect x="803.64" y="593.85" width="4.9" height="6.25" fill="#339a1f"/><rect x="810.12" y="595.80" width="4.9" height="4.30" fill="#339a1f"/><rect x="816.60" y="591.60" width="4.9" height="8.50" fill="#339a1f"/><rect x="823.08" y="597.30" width="4.9" height="2.80" fill="#339a1f"/><rect x="829.56" y="595.80" width="4.9" height="4.30" fill="#339a1f"/><rect x="836.04" y="595.80" width="4.9" height="4.30" fill="#339a1f"/><rect x="842.52" y="597.30" width="4.9" height="2.80" fill="#339a1f"/><rect x="849.00" y="595.80" width="4.9" height="4.30" fill="#339a1f"/><rect x="855.48" y="588.50" width="4.9" height="11.60" fill="#339a1f"/><rect x="861.96" y="591.10" width="4.9" height="9.00" fill="#339a1f"/><rect x="868.44" y="593.30" width="4.9" height="6.80" fill="#339a1f"/><rect x="874.92" y="591.10" width="4.9" height="9.00" fill="#339a1f"/></svg><div style="position:absolute;left:116px;top:625.5px;width:800px;height:53px;background:#1c202b;border:1px solid #272f40;border-radius:3px;box-sizing:border-box"></div><svg style="position:absolute;left:128.8px;top:638.80px" width="15" height="15" viewBox="0 0 15 15" fill="none" stroke="#8a93a5" stroke-width="1.05" stroke-linecap="round" stroke-linejoin="round"><path d="M6.8 1.0 L12.6 3.4 V10.3 L6.8 12.6 L1.0 10.3 V3.4 Z"/><path d="M1.0 3.4 L6.8 4.9 L12.6 3.4 M6.8 4.9 V12.6"/></svg><div style="position:absolute;left:147.3px;top:641.45px;display:flex;align-items:flex-start;white-space:nowrap;font-family:'Liberation Sans', sans-serif;will-change:transform"><span style="font-size:9.87px;line-height:1;font-weight:700;color:#eceff3">SFDC Account rETL</span><span style="margin-left:7px;margin-top:-4.55px;height:14.4px;padding:0 6px;background:#2c3548;border-radius:3px;font-size:9.1px;line-height:12.4px;color:#aab2bf">Tag 2</span></div><div class="t r" style="left:127.70px;top:655.07px;font-size:8.9px;font-weight:400;color:#8f97a6;letter-spacing:-0.05px;">Data product in&nbsp; <b style="font-weight:700;color:#dfe2e8">(workspace)</b><span style="display:inline-block;width:8.6px;height:1px;position:relative"><svg style="position:absolute;left:2.7px;top:-4.4px" width="5" height="7" viewBox="0 0 5 7"><path d="M1 1 L3.6 3.5 L1 6" fill="none" stroke="#666e80" stroke-width="0.9"/></svg></span><b style="font-weight:700;color:#dfe2e8">(deployment)</b></div><div style="position:absolute;left:312px;top:654.30px;width:1px;height:9.5px;background:#3c4352"></div><div class="t r" style="left:318.20px;top:655.07px;font-size:8.9px;font-weight:400;color:#7e8799;">Assets <b style="font-weight:700;color:#dfe2e8">12</b></div><div style="position:absolute;left:412.5px;top:652.60px;width:91.90px;height:11.4px;background:#1b57b0"></div><div class="t" style="left:510.40px;top:655.68px;font-size:9px;font-weight:700;color:#d3d7de;">$76</div><svg style="position:absolute;left:0;top:0" width="880" height="664"><rect x="687.00" y="657.95" width="4.9" height="6.15" fill="#1b57b0"/><rect x="693.48" y="660.80" width="4.9" height="3.30" fill="#1b57b0"/><rect x="699.96" y="657.95" width="4.9" height="6.15" fill="#1b57b0"/><rect x="706.44" y="661.90" width="4.9" height="2.20" fill="#1b57b0"/><rect x="712.92" y="659.30" width="4.9" height="4.80" fill="#1b57b0"/><rect x="719.40" y="660.80" width="4.9" height="3.30" fill="#1b57b0"/><rect x="725.88" y="657.95" width="4.9" height="6.15" fill="#1b57b0"/><rect x="732.36" y="655.10" width="4.9" height="9.00" fill="#1b57b0"/><rect x="738.84" y="657.00" width="4.9" height="7.10" fill="#1b57b0"/><rect x="745.32" y="659.30" width="4.9" height="4.80" fill="#1b57b0"/><rect x="751.80" y="660.80" width="4.9" height="3.30" fill="#1b57b0"/><rect x="758.28" y="657.00" width="4.9" height="7.10" fill="#1b57b0"/><rect x="764.76" y="660.80" width="4.9" height="3.30" fill="#1b57b0"/><rect x="771.24" y="659.00" width="4.9" height="5.10" fill="#1b57b0"/><rect x="777.72" y="660.80" width="4.9" height="3.30" fill="#1b57b0"/><rect x="784.20" y="660.80" width="4.9" height="3.30" fill="#1b57b0"/><rect x="790.68" y="655.10" width="4.9" height="9.00" fill="#1b57b0"/><rect x="797.16" y="657.00" width="4.9" height="7.10" fill="#1b57b0"/><rect x="803.64" y="657.00" width="4.9" height="7.10" fill="#1b57b0"/><rect x="810.12" y="659.30" width="4.9" height="4.80" fill="#1b57b0"/><rect x="816.60" y="655.10" width="4.9" height="9.00" fill="#1b57b0"/><rect x="823.08" y="660.80" width="4.9" height="3.30" fill="#1b57b0"/><rect x="829.56" y="659.50" width="4.9" height="4.60" fill="#1b57b0"/><rect x="836.04" y="659.50" width="4.9" height="4.60" fill="#1b57b0"/><rect x="842.52" y="660.80" width="4.9" height="3.30" fill="#1b57b0"/><rect x="849.00" y="659.30" width="4.9" height="4.80" fill="#1b57b0"/><rect x="855.48" y="652.10" width="4.9" height="12.00" fill="#1b57b0"/><rect x="861.96" y="654.10" width="4.9" height="10.00" fill="#1b57b0"/><rect x="868.44" y="657.00" width="4.9" height="7.10" fill="#1b57b0"/><rect x="874.92" y="650.10" width="4.9" height="14.00" fill="#1b57b0"/></svg><svg style="position:absolute;left:0;top:0;z-index:50" width="880" height="664" shape-rendering="crispEdges"><path fill-rule="evenodd" fill="#000" d="M0 0 H880 V664 H0 Z M36.5 0 H843.5 C861.385 0 880 18.615000000000002 880 36.5 V627.5 C880 645.385 861.385 664 843.5 664 H36.5 C18.615000000000002 664 0 645.385 0 627.5 V36.5 C0 18.615000000000002 18.615000000000002 0 36.5 0 Z"/></svg></div>
</body></html>
